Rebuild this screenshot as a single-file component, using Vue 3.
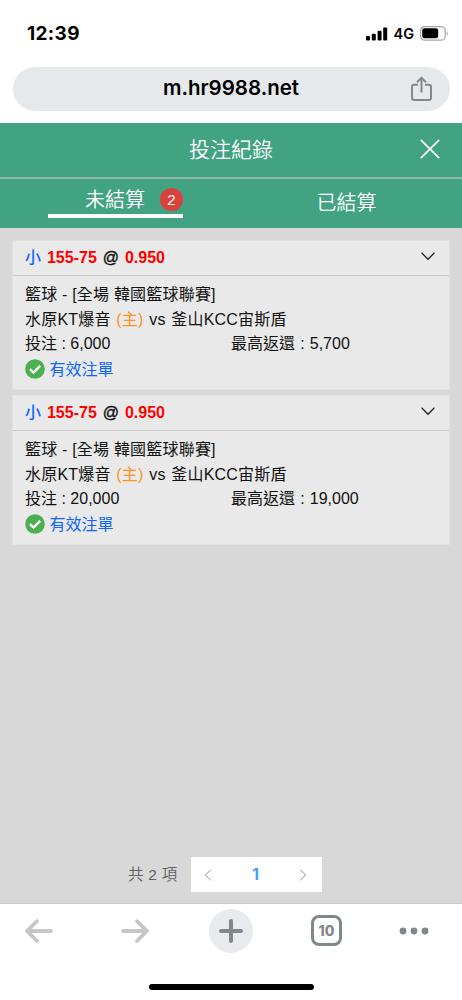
<script setup>
const bets = [
  { stake: '6,000', payout: '5,700' },
  { stake: '20,000', payout: '19,000' },
]
</script>

<template>
  <div class="screen">
    <div class="status">
      <span class="time">12:39</span>
      <div class="signals">
        <svg class="bars" width="22" height="14" viewBox="0 0 22 14">
          <rect x="0" y="9" width="4" height="4.5" rx="1" />
          <rect x="5.8" y="6.8" width="4" height="6.7" rx="1" />
          <rect x="11.6" y="3.8" width="4" height="9.7" rx="1" />
          <rect x="17.2" y="0.4" width="4" height="13.1" rx="1" />
        </svg>
        <span class="network">4G</span>
        <svg class="battery" width="29" height="15" viewBox="0 0 29 15">
          <rect x="0.6" y="0.6" width="24.6" height="13.6" rx="4" fill="none" stroke="#a5a5a5" stroke-width="1.2" />
          <rect x="2.2" y="2.3" width="16" height="10" rx="2.2" fill="#000" />
          <path d="M26.7 5.2c1.3.4 1.3 4.2 0 4.6z" fill="#a5a5a5" />
        </svg>
      </div>
    </div>

    <div class="address">
      <span class="url">m.hr9988.net</span>
      <svg class="share" width="24" height="26" viewBox="0 0 24 26" fill="none" stroke="#80888c" stroke-width="2">
        <path d="M8 8.7H4.2Q2 8.7 2 10.9V21.8Q2 24 4.2 24H18.8Q21 24 21 21.8V10.9Q21 8.7 18.8 8.7H15" />
        <path d="M11.5 16.5V2.5M7 6.3l4.5-4.4L16 6.3" />
      </svg>
    </div>

    <header class="title">
      <h1>投注紀錄</h1>
      <svg class="close" width="20" height="20" viewBox="0 0 20 20" stroke="#fff" stroke-width="1.7">
        <path d="M.8.8l18.4 18.4M19.2.8L.8 19.2" />
      </svg>
    </header>

    <nav class="tabs">
      <div class="tab">
        <div class="active"><span>未結算</span><b class="badge">2</b></div>
      </div>
      <div class="tab settled">已結算</div>
    </nav>

    <main class="content">
      <article v-for="bet in bets" :key="bet.stake" class="card">
        <div class="card-head">
          <span class="pick"><i>小</i> <em>155-75</em> <span class="at">@</span> <em>0.950</em></span>
          <svg class="chevron" width="14" height="9" viewBox="0 0 14 9" fill="none" stroke="#222" stroke-width="1.3">
            <path d="M.6.8L7 7.3 13.4.8" />
          </svg>
        </div>
        <div class="card-body">
          <div class="row league">籃球 - [全場 韓國籃球聯賽]</div>
          <div class="row match">水原KT爆音 <span class="home">(主)</span> vs 釜山KCC宙斯盾</div>
          <div class="row amounts"><span>投注 : {{ bet.stake }}</span><span class="payout">最高返還 : {{ bet.payout }}</span></div>
          <div class="row valid">
            <svg width="20" height="20" viewBox="0 0 20 20">
              <circle cx="10" cy="10" r="9.8" fill="#4caf50" />
              <path d="M5 10.2l3.5 3.4 6.6-6.8" fill="none" stroke="#fff" stroke-width="2.4" />
            </svg>
            <span>有效注單</span>
          </div>
        </div>
      </article>

      <div class="pagination">
        <span class="total">共 2 項</span>
        <div class="pager">
          <svg width="8" height="12" viewBox="0 0 8 12" fill="none" stroke="#c0c4cc" stroke-width="1.4"><path d="M6.8.8L1.3 6l5.5 5.2" /></svg>
          <b>1</b>
          <svg width="8" height="12" viewBox="0 0 8 12" fill="none" stroke="#c0c4cc" stroke-width="1.4"><path d="M1.2.8L6.7 6 1.2 11.2" /></svg>
        </div>
      </div>
    </main>

    <footer class="toolbar">
      <div class="tools">
        <svg width="30" height="26" viewBox="0 0 30 26" class="arrow"><path d="M27 13H3M13 3.2L3 13l10 9.8" /></svg>
        <svg width="30" height="26" viewBox="0 0 30 26" class="arrow"><path d="M3 13h24M17 3.2L27 13 17 22.8" /></svg>
        <div class="plus">
          <svg width="26" height="26" viewBox="0 0 26 26"><path d="M13 3v20M3 13h20" /></svg>
        </div>
        <div class="count">10</div>
        <svg width="30" height="8" viewBox="0 0 30 8" fill="#80888c">
          <circle cx="4" cy="4" r="3.4" /><circle cx="15" cy="4" r="3.4" /><circle cx="26" cy="4" r="3.4" />
        </svg>
      </div>
      <div class="home-bar"></div>
    </footer>
  </div>
</template>

<style>
body { margin: 0; background: #fff; }
</style>

<style scoped>
.screen {
  width: 462px;
  height: 1000px;
  display: flex;
  flex-direction: column;
  overflow: hidden;
  background: #fff;
  color: #111;
  font-family: "Liberation Sans", "Noto Sans CJK TC", sans-serif;
  font-size: 16px;
}
.status {
  height: 66px;
  box-sizing: border-box;
  padding: 0 13px 0 27px;
  display: flex;
  align-items: center;
  justify-content: space-between;
  font-family: Inter, sans-serif;
  color: #000;
}
.time { font-size: 19px; font-weight: 700; line-height: 24px; padding-top: 2px; letter-spacing: 0.35px; }
.signals { display: flex; align-items: center; padding-top: 1px; }
.network { font-size: 14.5px; font-weight: 600; line-height: 18px; margin: 1px 6px 0 5px; }
.address {
  height: 44px;
  margin: 0.5px 12.5px 12.5px;
  border-radius: 22px;
  background: #e6e9eb;
  display: grid;
  grid-template-columns: 1fr auto 1fr;
  align-items: center;
}
.url {
  grid-column: 2;
  font-family: Inter, sans-serif;
  font-size: 20.5px;
  font-weight: 600;
  line-height: 26px;
  margin-top: -1px;
  color: #000;
}
.share { justify-self: end; margin-right: 16px; }
.title {
  height: 54px;
  display: grid;
  grid-template-columns: 1fr auto 1fr;
  align-items: center;
  background: #41a381;
  color: #fff;
  border-bottom: 2px solid #95b7a9;
}
.title h1 { grid-column: 2; margin: 0; font-size: 21px; font-weight: 350; line-height: 30px; }
.close { justify-self: end; margin-right: 22px; margin-top: -2px; }
.tabs {
  height: 49px;
  display: grid;
  grid-template-columns: 1fr 1fr;
  background: #41a381;
  color: #fff;
  font-size: 20px;
  font-weight: 350;
}
.tab { display: flex; justify-content: center; }
.active {
  width: 135px;
  height: 39px;
  box-sizing: border-box;
  padding-left: 37px;
  border-bottom: 4px solid #fff;
  display: flex;
  justify-content: space-between;
  line-height: 42px;
}
.badge {
  width: 23px;
  height: 23px;
  margin-top: 9px;
  border-radius: 50%;
  background: #da413d;
  font-size: 15px;
  font-weight: 400;
  line-height: 23px;
  text-align: center;
}
.settled { line-height: 48px; }
.content {
  height: 676px;
  box-sizing: border-box;
  border-bottom: 1px solid #cbcbcb;
  padding: 12px 12px 0;
  background: #d8d8d8;
  display: flex;
  flex-direction: column;
}
.card {
  height: 149.5px;
  margin-bottom: 5.5px;
  background: #e9e9e9;
  outline: 1px solid #e1e1e1;
  outline-offset: -1px;
}
.card-head {
  height: 35px;
  border-bottom: 1px solid #c9c9c9;
  padding: 0 15px 0 13px;
  display: flex;
  align-items: center;
  justify-content: space-between;
}
.pick { font-weight: 500; word-spacing: 1.5px; line-height: 24px; }
.pick i { font-style: normal; color: #0d66ff; }
.pick em { font-style: normal; font-weight: 700; color: #f00; }
.at { -webkit-text-stroke: 0.4px #111; }
.chevron { margin-top: -3px; }
.card-body { padding: 7px 13px 0; }
.row { height: 24.6px; line-height: 24.6px; white-space: nowrap; }
.league { letter-spacing: 0.2px; }
.match { letter-spacing: 0.2px; word-spacing: 1px; }
.home { color: #ff9320; }
.amounts { display: grid; grid-template-columns: 206px 1fr; }
.payout { word-spacing: 0.7px; }
.valid { display: flex; align-items: center; gap: 5px; color: #0d66ff; padding-top: 1px; }
.valid svg { margin: -2px 0 0 -0.5px; }
.pagination {
  margin: auto 0 11px 116px;
  display: flex;
  align-items: center;
}
.total { width: 63px; margin-top: -3px; font-size: 15.5px; font-weight: 350; color: #606266; word-spacing: 0.5px; }
.pager {
  width: 131px;
  height: 35px;
  box-sizing: border-box;
  padding: 0 15px 0 13px;
  background: #fff;
  display: flex;
  align-items: center;
  justify-content: space-between;
}
.pager b { font-family: Inter, sans-serif; font-size: 15.5px; color: #409eff; }
.toolbar { flex: 1; }
.tools {
  height: 53px;
  display: grid;
  grid-template-columns: 78px 114px 78px 113px 62px;
  align-items: center;
  justify-items: center;
}
.arrow { fill: none; stroke: #c6c6c6; stroke-width: 3.8; stroke-linecap: round; stroke-linejoin: round; }
.plus {
  width: 44px;
  height: 44px;
  border-radius: 50%;
  background: #e8eaed;
  display: flex;
  align-items: center;
  justify-content: center;
}
.plus svg { fill: none; stroke: #80888c; stroke-width: 4; stroke-linecap: round; }
.count {
  width: 31px;
  height: 31px;
  box-sizing: border-box;
  border: 3px solid #80888c;
  border-radius: 8px;
  font-family: Inter, sans-serif;
  font-size: 14px;
  font-weight: 800;
  line-height: 26px;
  text-align: center;
  color: #80888c;
}
.home-bar { width: 165px; height: 6px; margin: 27px auto 0; border-radius: 3px; background: #000; }
</style>
